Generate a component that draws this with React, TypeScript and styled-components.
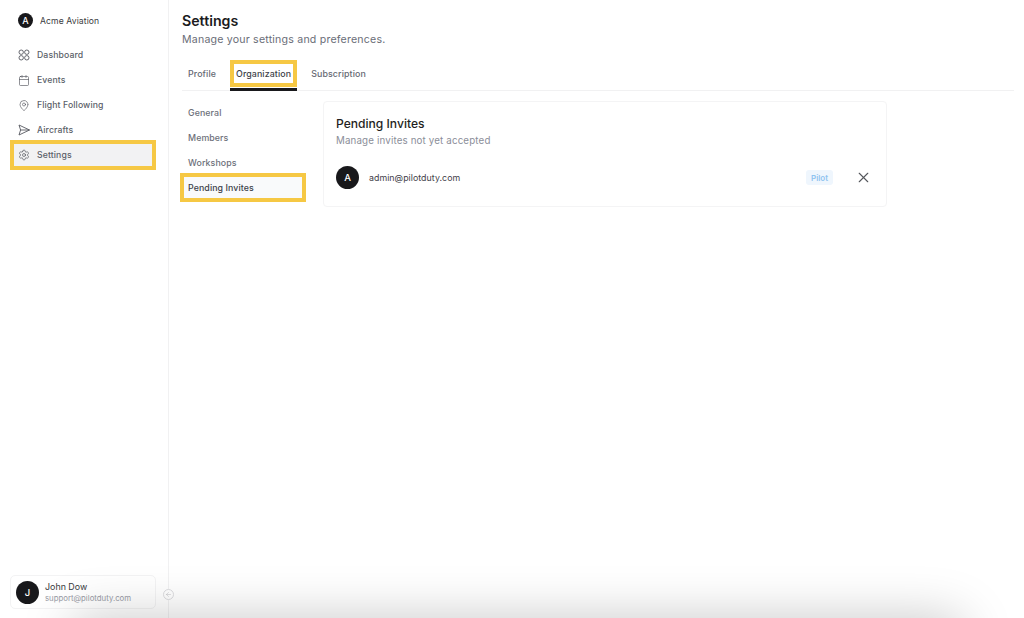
import React from 'react';
import styled, { createGlobalStyle } from 'styled-components';
import { ArrowLeft, Calendar, MapPin, Settings as SettingsIcon, X } from 'lucide-react';

const GlobalStyle = createGlobalStyle`
  html, body {
    margin: 0;
    padding: 0;
    background: #fff;
  }
  body {
    font-family: Inter, "Liberation Sans", sans-serif;
    color: #1c1c1f;
  }
  * {
    box-sizing: border-box;
  }
`;

const DashboardIcon = () => (
  <svg width="12" height="12" viewBox="0 0 12 12" fill="none" stroke="currentColor" strokeWidth="0.9">
    <circle cx="3.2" cy="3.2" r="2.2" />
    <circle cx="8.8" cy="3.2" r="2.2" />
    <circle cx="3.2" cy="8.8" r="2.2" />
    <circle cx="8.8" cy="8.8" r="2.2" />
  </svg>
);

const PlaneIcon = () => (
  <svg width="12" height="12" viewBox="0 0 12 12" fill="none" stroke="currentColor" strokeWidth="0.9" strokeLinejoin="round">
    <path d="M1 1l10.5 5L1 11l1.6-5L1 1z" />
    <path d="M2.6 6h8.9" />
  </svg>
);

const navItems = [
  { label: 'Dashboard', icon: <DashboardIcon /> },
  { label: 'Events', icon: <Calendar size={13} strokeWidth={1.3} /> },
  { label: 'Flight Following', icon: <MapPin size={13} strokeWidth={1.3} /> },
  { label: 'Aircrafts', icon: <PlaneIcon /> },
  { label: 'Settings', icon: <SettingsIcon size={12} strokeWidth={1.4} />, active: true },
];

const tabs = [
  { label: 'Profile' },
  { label: 'Organization', active: true },
  { label: 'Subscription' },
];

const subItems = [
  { label: 'General' },
  { label: 'Members' },
  { label: 'Workshops' },
  { label: 'Pending Invites', active: true },
];

export default function App() {
  return (
    <Page>
      <GlobalStyle />
      <Sidebar>
        <Brand>
          <Avatar $size={15} $font={9}>A</Avatar>
          <BrandName>Acme Aviation</BrandName>
        </Brand>
        <Nav>
          {navItems.map((item) => (
            <NavItem key={item.label} $active={item.active}>
              <NavIcon>{item.icon}</NavIcon>
              {item.label}
            </NavItem>
          ))}
        </Nav>
        <UserCard>
          <Avatar $size={23} $font={9.5}>J</Avatar>
          <UserText>
            <UserName>John Dow</UserName>
            <UserEmail>support@pilotduty.com</UserEmail>
          </UserText>
        </UserCard>
        <CollapseButton>
          <ArrowLeft size={7} strokeWidth={1.5} />
        </CollapseButton>
      </Sidebar>
      <Main>
        <Title>Settings</Title>
        <Subtitle>Manage your settings and preferences.</Subtitle>
        <Tabs>
          {tabs.map((tab) => (
            <Tab key={tab.label} $active={tab.active}>
              <TabLabel $active={tab.active}>{tab.label}</TabLabel>
            </Tab>
          ))}
        </Tabs>
        <Content>
          <SubNav>
            {subItems.map((item) => (
              <SubItem key={item.label} $active={item.active}>{item.label}</SubItem>
            ))}
          </SubNav>
          <Card>
            <CardTitle>Pending Invites</CardTitle>
            <CardText>Manage invites not yet accepted</CardText>
            <InviteRow>
              <Avatar $size={23} $font={9.5}>A</Avatar>
              <InviteEmail>admin@pilotduty.com</InviteEmail>
              <RoleBadge>Pilot</RoleBadge>
              <RemoveButton>
                <X size={17} strokeWidth={1.6} />
              </RemoveButton>
            </InviteRow>
          </Card>
        </Content>
      </Main>
      <BottomShadow />
    </Page>
  );
}

const Page = styled.div`
  position: relative;
  display: flex;
  width: 1024px;
  height: 618px;
  overflow: hidden;
  background: #fff;
`;

const Sidebar = styled.aside`
  position: relative;
  display: flex;
  flex-direction: column;
  width: 169px;
  flex-shrink: 0;
  padding: 13px 12px 9px 10px;
  border-right: 1px solid #f1f1f2;
`;

const Brand = styled.div`
  display: flex;
  align-items: center;
  gap: 7px;
  padding-left: 8px;
  height: 15px;
`;

const BrandName = styled.span`
  font-size: 8.6px;
  letter-spacing: 0.1px;
  color: #3a3b40;
`;

const Avatar = styled.span<{ $size: number; $font: number }>`
  display: flex;
  align-items: center;
  justify-content: center;
  flex-shrink: 0;
  width: ${({ $size }) => $size}px;
  height: ${({ $size }) => $size}px;
  border-radius: 50%;
  background: #18181b;
  color: #fff;
  font-size: ${({ $font }) => $font}px;
  font-weight: 500;
`;

const Nav = styled.nav`
  display: flex;
  flex-direction: column;
  margin-top: 12px;
  flex: 1;
`;

const NavItem = styled.a<{ $active?: boolean }>`
  display: flex;
  align-items: center;
  gap: 7px;
  width: 146px;
  height: 30px;
  margin-bottom: -5px;
  padding-left: ${({ $active }) => ($active ? '4px' : '8px')};
  border: ${({ $active }) => ($active ? '4px solid #f6c844' : 'none')};
  background: ${({ $active }) => ($active ? '#f2f2f3' : 'transparent')};
  font-size: 8.7px;
  letter-spacing: 0.1px;
  font-weight: 500;
  color: #5c5f69;
`;

const NavIcon = styled.span`
  display: flex;
  align-items: center;
  justify-content: center;
  width: 12px;
  height: 12px;
  color: #55575f;
`;

const UserCard = styled.div`
  display: flex;
  align-items: center;
  gap: 6px;
  width: 146px;
  height: 34px;
  padding-left: 5px;
  border: 1px solid #f3f3f4;
  border-radius: 5px;
`;

const UserText = styled.div`
  display: flex;
  flex-direction: column;
  gap: 1px;
`;

const UserName = styled.span`
  font-size: 8.9px;
  line-height: 11px;
  color: #3a3b40;
`;

const UserEmail = styled.span`
  font-size: 7.8px;
  line-height: 10px;
  color: #9a9ca6;
`;

const CollapseButton = styled.button`
  position: absolute;
  right: -6px;
  bottom: 18px;
  display: flex;
  align-items: center;
  justify-content: center;
  width: 11px;
  height: 11px;
  padding: 0;
  border: 1px solid #dcdcdf;
  border-radius: 50%;
  background: #fff;
  color: #b5b5ba;
`;

const Main = styled.main`
  display: flex;
  flex-direction: column;
  flex: 1;
  padding: 12px 10px 0 13px;
`;

const Title = styled.h1`
  margin: 0;
  font-size: 14.2px;
  line-height: 18px;
  font-weight: 600;
  color: #1b1b1e;
`;

const Subtitle = styled.p`
  margin: 2px 0 0;
  font-size: 10.6px;
  line-height: 16px;
  letter-spacing: 0.2px;
  color: #6a6d77;
`;

const Tabs = styled.div`
  display: flex;
  height: 31px;
  margin-top: 12px;
  border-bottom: 1px solid #f1f1f2;
`;

const Tab = styled.div<{ $active?: boolean }>`
  display: flex;
  flex-direction: column;
  flex-shrink: 0;
  height: 31px;
  margin-right: 8px;
  padding: ${({ $active }) => ($active ? '0' : '0 6px')};
  border-bottom: 3px solid ${({ $active }) => ($active ? '#18181b' : 'transparent')};
`;

const TabLabel = styled.span<{ $active?: boolean }>`
  display: flex;
  align-items: center;
  height: 27px;
  padding: 0 ${({ $active }) => ($active ? '2px' : '0')};
  border: ${({ $active }) => ($active ? '4px solid #f6c844' : 'none')};
  font-size: 8.85px;
  letter-spacing: 0.1px;
  font-weight: 500;
  color: ${({ $active }) => ($active ? '#3c3f49' : '#666973')};
`;

const Content = styled.div`
  display: flex;
  gap: 17px;
  margin-top: 10px;
`;

const SubNav = styled.div`
  display: flex;
  flex-direction: column;
  width: 126px;
  margin-top: -1px;
  margin-left: -2px;
`;

const SubItem = styled.a<{ $active?: boolean }>`
  display: flex;
  align-items: center;
  height: ${({ $active }) => ($active ? '29px' : '25px')};
  margin-top: ${({ $active }) => ($active ? '-2px' : '0')};
  padding-left: ${({ $active }) => ($active ? '4px' : '8px')};
  border: ${({ $active }) => ($active ? '4px solid #f6c844' : 'none')};
  background: ${({ $active }) => ($active ? '#f9fafb' : 'transparent')};
  font-size: 8.8px;
  letter-spacing: 0.1px;
  font-weight: 500;
  color: ${({ $active }) => ($active ? '#3c3f49' : '#6d707a')};
`;

const Card = styled.section`
  display: flex;
  flex-direction: column;
  width: 564px;
  height: 106px;
  padding: 14px 12px 0;
  border: 1px solid #f4f4f5;
  border-radius: 4px;
`;

const CardTitle = styled.h2`
  margin: 0;
  font-size: 12.1px;
  line-height: 15px;
  font-weight: 500;
  color: #1f1f22;
`;

const CardText = styled.p`
  margin: 3px 0 0;
  font-size: 9.75px;
  line-height: 14px;
  letter-spacing: 0.15px;
  color: #8b8e99;
`;

const InviteRow = styled.div`
  display: flex;
  align-items: center;
  margin-top: 18px;
`;

const InviteEmail = styled.span`
  margin-left: 10px;
  flex: 1;
  font-size: 8.8px;
  letter-spacing: 0.05px;
  color: #3f4149;
`;

const RoleBadge = styled.span`
  display: flex;
  align-items: center;
  justify-content: center;
  width: 27px;
  height: 15px;
  border-radius: 3px;
  background: #eff6fd;
  color: #8fc4f0;
  font-size: 8px;
  font-weight: 600;
`;

const RemoveButton = styled.button`
  display: flex;
  align-items: center;
  justify-content: center;
  width: 17px;
  height: 17px;
  margin-left: 22px;
  margin-right: 2px;
  padding: 0;
  border: none;
  background: none;
  color: #55575c;
`;

const BottomShadow = styled.div`
  position: absolute;
  left: 72px;
  right: 62px;
  bottom: -60px;
  height: 60px;
  border-radius: 10px;
  box-shadow: 0 0 52px 0 rgba(0, 0, 0, 0.22);
`;
